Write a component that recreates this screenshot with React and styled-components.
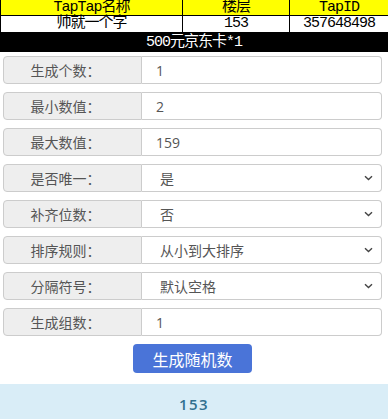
import * as React from "react";
import styled, { createGlobalStyle } from "styled-components";

const GlobalStyle = createGlobalStyle`
  body {
    margin: 0;
    background: #fff;
    font-family: "Open Sans", "Noto Sans CJK SC", sans-serif;
  }
`;

const fields = [
  { label: "生成个数：", value: "1" },
  { label: "最小数值：", value: "2" },
  { label: "最大数值：", value: "159" },
  { label: "是否唯一：", value: "是", select: true },
  { label: "补齐位数：", value: "否", select: true },
  { label: "排序规则：", value: "从小到大排序", select: true },
  { label: "分隔符号：", value: "默认空格", select: true },
  { label: "生成组数：", value: "1" },
];

const Chevron = () => (
  <svg width="9" height="6" viewBox="0 0 9 6">
    <path d="M1 1.2 L4.5 4.5 L8 1.2" fill="none" stroke="#444" strokeWidth="1.4" />
  </svg>
);

const App = () => {
  return (
    <Page>
      <GlobalStyle />
      <Table>
        <HeadCell>TapTap名称</HeadCell>
        <HeadCell>楼层</HeadCell>
        <HeadCell>TapID</HeadCell>
        <Cell>帅就一个字</Cell>
        <Cell>153</Cell>
        <Cell>357648498</Cell>
      </Table>
      <Banner>500元京东卡*1</Banner>
      <Form>
        {fields.map((f) => (
          <Row key={f.label}>
            <Label>{f.label}</Label>
            <Field $select={f.select}>
              <span>{f.value}</span>
              {f.select && <Chevron />}
            </Field>
          </Row>
        ))}
        <ButtonWrap>
          <Button>生成随机数</Button>
        </ButtonWrap>
      </Form>
      <Result>153</Result>
    </Page>
  );
};

const Page = styled.div`
  width: 388px;
  height: 419px;
  overflow: hidden;
`;

const Table = styled.div`
  display: grid;
  grid-template-columns: 182px 107px 99px;
  border-left: 1px solid #000;
  font-family: "Liberation Mono", "Noto Sans CJK SC", monospace;
  font-size: 15px;
  letter-spacing: -1px;
  color: #000;
`;

const Cell = styled.div`
  height: 16px;
  line-height: 16px;
  text-align: center;
  border-right: 1px solid #000;
  border-bottom: 1px solid #000;
  background: #fff;
  white-space: nowrap;
`;

const HeadCell = styled(Cell)`
  height: 15px;
  line-height: 15px;
  background: #ffff00;
`;

const Banner = styled.div`
  height: 19px;
  line-height: 19px;
  background: #000;
  color: #fff;
  text-align: center;
  font-family: "Liberation Mono", "Noto Sans CJK SC", monospace;
  font-size: 15px;
  letter-spacing: -1px;
`;

const Form = styled.div`
  display: flex;
  flex-direction: column;
  gap: 8px;
  padding: 4px 6px 0 3px;
`;

const Row = styled.div`
  display: flex;
  height: 28px;
  font-size: 14px;
  color: #555;
`;

const Label = styled.div`
  width: 139px;
  box-sizing: border-box;
  display: flex;
  align-items: center;
  justify-content: center;
  padding-right: 14px;
  background: #eee;
  border: 1px solid #ccc;
  border-radius: 4px 0 0 4px;
  color: #555;
  font-size: 14px;
`;

const Field = styled.div`
  flex: 1;
  box-sizing: border-box;
  display: flex;
  align-items: center;
  justify-content: space-between;
  padding: 0 8px 0 ${(p) => (p.$select ? "18px" : "14px")};
  border: 1px solid #ccc;
  border-left: none;
  border-radius: 0 4px 4px 0;
  background: #fff;
  color: #555;
  font-size: 14px;
`;

const ButtonWrap = styled.div`
  display: flex;
  justify-content: center;
`;

const Button = styled.button`
  width: 119px;
  height: 29px;
  border: none;
  border-radius: 4px;
  background: #4a74d8;
  color: #fff;
  font-family: "Open Sans", "Noto Sans CJK SC", sans-serif;
  font-size: 16px;
`;

const Result = styled.div`
  margin-top: 11px;
  height: 40px;
  line-height: 40px;
  background: #d9edf7;
  color: #31708f;
  text-align: center;
  font-size: 15px;
  font-weight: 600;
  letter-spacing: 1.5px;
`;

export default App;
